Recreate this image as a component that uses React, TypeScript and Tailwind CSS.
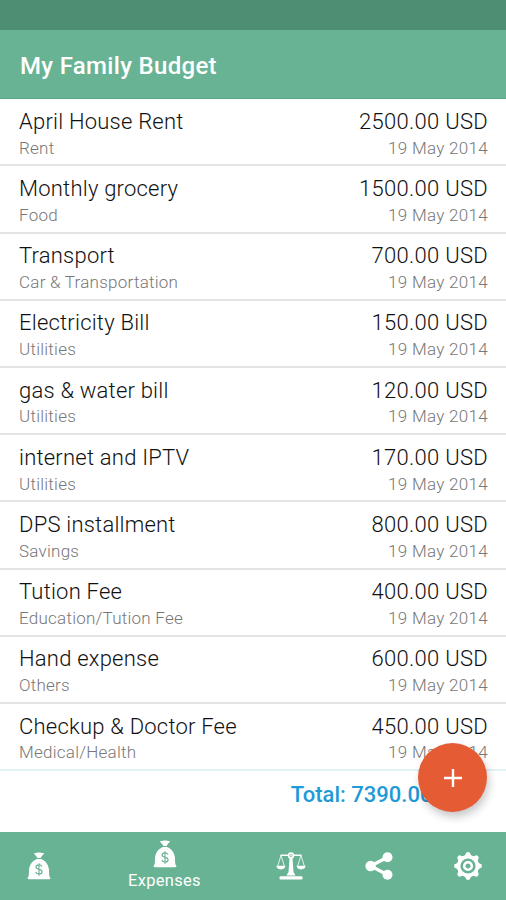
type Expense = { title: string; category: string; amount: string };

const expenses: Expense[] = [
  { title: "April House Rent", category: "Rent", amount: "2500.00" },
  { title: "Monthly grocery", category: "Food", amount: "1500.00" },
  { title: "Transport", category: "Car & Transportation", amount: "700.00" },
  { title: "Electricity Bill", category: "Utilities", amount: "150.00" },
  { title: "gas & water bill", category: "Utilities", amount: "120.00" },
  { title: "internet and IPTV", category: "Utilities", amount: "170.00" },
  { title: "DPS installment", category: "Savings", amount: "800.00" },
  { title: "Tution Fee", category: "Education/Tution Fee", amount: "400.00" },
  { title: "Hand expense", category: "Others", amount: "600.00" },
  { title: "Checkup & Doctor Fee", category: "Medical/Health", amount: "450.00" },
];

function MoneyBag() {
  return (
    <svg className="block h-7 w-6" viewBox="0 0 24 28" fill="#fff">
      <path d="M7 1c1.800.4 2.800-.4 5-.4s3.200.8 5 .4c-.4 1.500-2.400 3-3.400 5h-3.200C9.400 4 7.400 2.500 7 1Z" />
      <path d="M10 7h4c4.600 1.600 7.600 6 8 11 .2 3.600-.2 6.400 1.300 7.800.5.700-.1 1.500-1.300 1.500H2c-1.200 0-1.800-.8-1.300-1.500C2.200 24.400 1.800 21.600 2 18c.4-5 3.400-9.400 8-11Z" />
      <g fill="none" stroke="#68b394" strokeWidth="1.100">
        <path d="M15 14.600c-.5-1.200-1.500-1.700-3-1.700-1.900 0-3 .8-3 2.200 0 3.200 6.100 1.300 6.100 4.600 0 1.400-1.200 2.300-3.100 2.300-1.600 0-2.800-.7-3.200-2M12 11.200v12.600" />
      </g>
    </svg>
  );
}

function Scales() {
  return (
    <svg className="block h-7 w-[30px]" viewBox="0 0 30 28" fill="#fff">
      <circle cx="15" cy="3.400" r="2.400" fill="none" stroke="#fff" strokeWidth="1.600" />
      <circle cx="15" cy="3.400" r="1.200" opacity=".7" />
      <path d="M13.500 6h3l1 14 2 3.500h-9l2-3.500Z" />
      <rect x="3.500" y="24.200" width="23" height="3.300" rx="1.200" />
      <path d="M4.500 2.500h8.300v1.600H4.500zM17.200 2.500h8.300v1.600h-8.300z" />
      <path d="M.4 13.800h9c0 2.200-1.900 3.600-4.500 3.600S.4 16 .4 13.800ZM20.600 13.800h9c0 2.200-1.900 3.600-4.500 3.600s-4.500-1.400-4.500-3.600Z" />
      <path d="M5 3.500 1.700 14M5 3.500 8.300 14M25 3.500 21.700 14M25 3.500 28.300 14" fill="none" stroke="#fff" strokeWidth=".8" />
    </svg>
  );
}

function Share() {
  return (
    <svg className="block h-7 w-7" viewBox="0 0 28 28" fill="#fff">
      <path d="M22.500 5.300 5.600 14l16.900 8.700" fill="none" stroke="#fff" strokeWidth="3.300" />
      <circle cx="22.500" cy="5.300" r="5" />
      <circle cx="5.600" cy="14" r="5.200" />
      <circle cx="22.500" cy="22.700" r="5" />
    </svg>
  );
}

function Gear() {
  return (
    <svg className="block h-7 w-7" viewBox="-14 -14 28 28" fill="#fff">
      {[0, 45, 90, 135, 180, 225, 270, 315].map((angle) => (
        <path key={angle} transform={`rotate(${angle})`} d="M-4.500-9.500Q-2.600-10.500-2.300-12.300Q-2-14 0-14T2.300-12.300Q2.600-10.500 4.500-9.500Z" />
      ))}
      <circle r="9.300" fill="none" stroke="#fff" strokeWidth="3.400" />
      <circle r="3.800" fill="none" stroke="#fff" strokeWidth="2.600" />
    </svg>
  );
}

export default function App() {
  return (
    <div className="relative flex h-[900px] w-[506px] flex-col overflow-hidden bg-white font-['Roboto',sans-serif]">
      <div className="h-[30px] shrink-0 bg-[#4e8f73]" />
      <header className="flex h-[69.300px] shrink-0 items-center border-b border-[#58a384] bg-[#68b394] pl-5">
        <h1 className="mt-1 text-[24px] leading-7 font-medium tracking-[0.320px] text-white">My Family Budget</h1>
      </header>
      <ul className="shrink-0">
        {expenses.map((e) => (
          <li key={e.title} className="flex h-[67.200px] justify-between border-b-2 border-[#e4e4e4] pt-[8.600px] pr-[18px] pl-[19px] last:border-[#e3f1f8]">
            <div>
              <p className="text-[22px] leading-7 font-light tracking-[0.220px] text-[#111]">{e.title}</p>
              <p className="mt-[-0.200px] text-[17px] leading-6 font-light tracking-[0.250px] text-[#777]">{e.category}</p>
            </div>
            <div className="text-right">
              <p className="text-[22px] leading-7 font-light tracking-[0.300px] text-[#111]">{e.amount} USD</p>
              <p className="mt-[-0.200px] text-[17px] leading-6 font-light tracking-[0.300px] text-[#777]">19 May 2014</p>
            </div>
          </li>
        ))}
      </ul>
      <div className="flex flex-1 justify-end pt-[9.500px] pr-[26px]">
        <p className="text-[22px] leading-7 font-medium text-[#1f9ad6]">Total: 7390.00 USD</p>
      </div>
      <nav className="flex h-[68px] shrink-0 bg-[#68b394]">
        <div className="flex w-[78px] justify-center pt-5"><MoneyBag /></div>
        <div className="flex w-[173px] flex-col items-center pt-[7.500px]">
          <MoneyBag />
          <span className="mt-[3.500px] text-[16.500px] leading-5 tracking-[0.300px] text-white">Expenses</span>
        </div>
        <div className="flex w-[80px] justify-center pt-5"><Scales /></div>
        <div className="flex w-[96px] justify-center pt-5"><Share /></div>
        <div className="flex flex-1 justify-center pt-5 pl-[3px]"><Gear /></div>
      </nav>
      <button className="absolute top-[743px] left-[418px] flex size-[69px] items-center justify-center rounded-full bg-[#e55b34] shadow-[2px_5px_8px_rgba(0,0,0,0.220)]" aria-label="Add expense">
        <svg className="size-[18px]" viewBox="0 0 18 18"><path d="M9 0v18M0 9h18" stroke="#fff" strokeWidth="2.400" /></svg>
      </button>
    </div>
  );
}
